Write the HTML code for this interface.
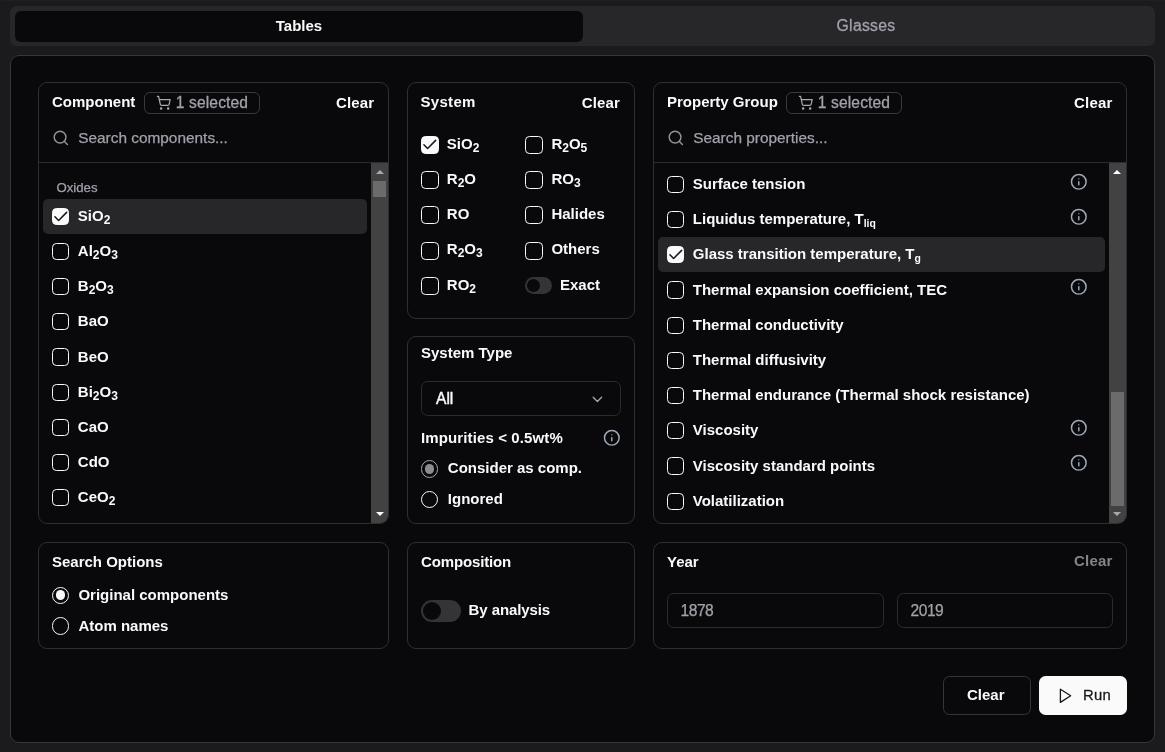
<!DOCTYPE html>
<html lang="en">
<head>
<meta charset="utf-8">
<title>Search</title>
<style>
*{box-sizing:border-box;margin:0;padding:0}
html,body{width:1165px;height:752px;overflow:hidden;background:#1b1b1d;}
body::before{content:"";position:absolute;left:0;top:0;width:1165px;height:1px;background:#1f1f22}
body{font-family:"Liberation Sans",sans-serif;color:#fafafa;font-size:15px;line-height:20px;position:relative;-webkit-font-smoothing:antialiased}
.abs{position:absolute}
.tabs{will-change:transform;position:absolute;left:10px;top:6px;width:1145px;height:40px;background:#27272a;border-radius:7px}
.tab{position:absolute;top:5px;height:31px;padding-bottom:1.6px;border-radius:6px;display:flex;align-items:center;justify-content:center;font-size:15px}
.tab.on{left:5px;width:568px;background:#09090b;color:#fafafa;font-weight:bold}
.tab.off{-webkit-text-stroke:.3px #a1a1aa;left:573px;width:568px;color:#a1a1aa;font-size:15.8px;letter-spacing:.25px;padding-right:2px}
.main{will-change:transform;position:absolute;left:10px;top:55px;width:1145px;height:688px;background:#09090b;border:1px solid #36363b;border-radius:9px}
.card{position:absolute;background:#09090b;border:1px solid #2f2f33;border-radius:9px;overflow:hidden}
.title{position:absolute;font-weight:bold;font-size:15px;line-height:20px;white-space:nowrap;color:#fafafa}
.clear{position:absolute;font-weight:bold;font-size:15px;line-height:20px;color:#fafafa;letter-spacing:.15px;margin-left:-.5px}
.clear.dim{color:#858589}
.badge{position:absolute;height:22px;border:1px solid #38383e;border-radius:6px;color:#a1a1aa;font-size:15.6px;line-height:20px;display:flex;align-items:center;white-space:nowrap}
.badge svg{position:absolute;left:11px;top:1.8px}
.badge span{-webkit-text-stroke:.3px #a1a1aa;position:absolute;left:30.8px;top:0px;letter-spacing:.12px}
.search{position:absolute;left:0;right:0;top:36px;height:44px;border-bottom:1px solid #2c2c30}
.search svg{position:absolute;left:12.7px;top:11.2px}
.search span{-webkit-text-stroke:.25px #a1a1aa;position:absolute;left:39.2px;top:9.5px;color:#a1a1aa;font-size:15.4px;white-space:nowrap}
.row{position:absolute;height:35.2px;display:flex;align-items:center;font-weight:bold;font-size:15px;white-space:nowrap;border-radius:5px}
.row.sel{background:#27272a}
.cb{flex:none;display:inline-block;width:17.2px;height:17.2px;border:1.1px solid #fafafa;border-radius:4.4px;position:relative}
.cb.on{background:#fafafa}
.sys .cb{width:17.9px;height:17.9px}
.sys .cb svg{left:-.9px;top:-.9px}
.cb svg{position:absolute;left:-1.2px;top:-1.1px}
.row .lbl{position:absolute;top:7.2px;line-height:20px}
sub{font-size:12px;vertical-align:-2.7px;line-height:0}
sub.l{font-size:10.4px;vertical-align:-3.2px}
.grp{-webkit-text-stroke:.25px #a1a1aa;position:absolute;color:#a1a1aa;font-size:13.2px;line-height:18px}
.sbar{position:absolute;width:17px;background:#424242}
.sbar .thumb{position:absolute;left:2px;width:13px;background:#6b6b6b}
.tri{position:absolute;left:4.5px;width:0;height:0;border-left:4px solid transparent;border-right:4px solid transparent}
.tri.up{border-bottom:4.5px solid #fff}
.tri.dn{border-top:4.5px solid #fff}
.tri.dis{opacity:.55}
.info{position:absolute;width:17.6px;height:17.6px}
.radio{position:absolute;width:17.3px;height:17.3px;border:1.1px solid #fafafa;border-radius:50%}
.radio.on::after{content:"";position:absolute;left:2.6px;top:2.6px;width:9.9px;height:9.9px;border-radius:50%;background:#fafafa}
.radio.dis{border-color:#a9a9ab}
.radio.dis::after{background:#8d8d8f}
.txt{position:absolute;font-weight:bold;font-size:15px;line-height:20px;white-space:nowrap}
.switch{position:absolute;background:#333338;border-radius:99px}
.switch i{position:absolute;border-radius:50%;background:#09090b}
.input{-webkit-text-stroke:.25px #a1a1aa;letter-spacing:-.5px;position:absolute;height:35px;border:1px solid #2c2c30;border-radius:6.6px;color:#a1a1aa;font-size:15.6px;line-height:33px;padding-left:12.6px}
.btn{position:absolute;top:621px;height:39px;border-radius:6.6px;display:flex;align-items:center;justify-content:center;font-size:15px}
</style>
</head>
<body>
<div class="tabs">
  <div class="tab on">Tables</div>
  <div class="tab off">Glasses</div>
</div>
<div class="main">

<div class="card" style="left:27px;top:26px;width:351px;height:442px">
<div class="title" style="left:13px;top:8.799999999999997px">Component</div>
<div class="badge" style="left:105px;top:9px;width:116px"><svg class="cart" viewBox="0 0 24 24" width="15.4" height="15.4" fill="none" stroke="#a9a9b2" stroke-width="1.9" stroke-linecap="round" stroke-linejoin="round"><circle cx="8" cy="21" r="1"/><circle cx="19" cy="21" r="1"/><path d="M2.05 2.05h2l2.66 12.42a2 2 0 0 0 2 1.58h9.78a2 2 0 0 0 1.95-1.57l1.65-7.43H5.12"/></svg><span>1 selected</span></div>
<div class="clear" style="left:297.5px;top:9.599999999999994px">Clear</div>
<div class="search" style="top:35px;height:45px"><svg viewBox="0 0 24 24" width="17.6" height="17.6" fill="none" stroke="#929296" stroke-width="2" stroke-linecap="round" stroke-linejoin="round"><circle cx="11" cy="11" r="8"/><path d="m21 21-4.3-4.3"/></svg><span>Search components...</span></div>
<div class="grp" style="left:17.5px;top:95.5px">Oxides</div>
<div class="row sel" style="left:4px;top:115.80px;width:324px;padding-left:9px"><span class="cb on"><svg viewBox="0 0 24 24" width="17.6" height="17.6" fill="none" stroke="#18181b" stroke-width="2.1" stroke-linecap="round" stroke-linejoin="round"><path d="M20 6 9 17l-5-5"/></svg></span><span class="lbl" style="left:34.8px">SiO<sub>2</sub></span></div>
<div class="row" style="left:4px;top:150.95px;width:324px;padding-left:9px"><span class="cb"></span><span class="lbl" style="left:34.8px">Al<sub>2</sub>O<sub>3</sub></span></div>
<div class="row" style="left:4px;top:186.10px;width:324px;padding-left:9px"><span class="cb"></span><span class="lbl" style="left:34.8px">B<sub>2</sub>O<sub>3</sub></span></div>
<div class="row" style="left:4px;top:221.25px;width:324px;padding-left:9px"><span class="cb"></span><span class="lbl" style="left:34.8px">BaO</span></div>
<div class="row" style="left:4px;top:256.40px;width:324px;padding-left:9px"><span class="cb"></span><span class="lbl" style="left:34.8px">BeO</span></div>
<div class="row" style="left:4px;top:291.55px;width:324px;padding-left:9px"><span class="cb"></span><span class="lbl" style="left:34.8px">Bi<sub>2</sub>O<sub>3</sub></span></div>
<div class="row" style="left:4px;top:326.70px;width:324px;padding-left:9px"><span class="cb"></span><span class="lbl" style="left:34.8px">CaO</span></div>
<div class="row" style="left:4px;top:361.85px;width:324px;padding-left:9px"><span class="cb"></span><span class="lbl" style="left:34.8px">CdO</span></div>
<div class="row" style="left:4px;top:397.00px;width:324px;padding-left:9px"><span class="cb"></span><span class="lbl" style="left:34.8px">CeO<sub>2</sub></span></div>
<div class="sbar" style="left:332px;top:80px;height:360px"><div class="tri up dis" style="top:7px"></div><div class="thumb" style="top:17.5px;height:16.5px"></div><div class="tri dn" style="bottom:7.2px"></div></div>
</div>
<div class="card" style="left:396px;top:26px;width:228px;height:237px">
<div class="title" style="left:12.5px;top:8.799999999999997px;letter-spacing:.3px">System</div>
<div class="clear" style="left:174.29999999999995px;top:9.599999999999994px">Clear</div>
<div class="row sys" style="left:13px;top:44.30px;width:100px"><span class="cb on"><svg viewBox="0 0 24 24" width="17.6" height="17.6" fill="none" stroke="#18181b" stroke-width="2.1" stroke-linecap="round" stroke-linejoin="round"><path d="M20 6 9 17l-5-5"/></svg></span><span class="lbl" style="left:25.8px;top:6.4px">SiO<sub>2</sub></span></div>
<div class="row sys" style="left:13px;top:79.55px;width:100px"><span class="cb"></span><span class="lbl" style="left:25.8px;top:6.4px">R<sub>2</sub>O</span></div>
<div class="row sys" style="left:13px;top:114.80px;width:100px"><span class="cb"></span><span class="lbl" style="left:25.8px;top:6.4px">RO</span></div>
<div class="row sys" style="left:13px;top:150.05px;width:100px"><span class="cb"></span><span class="lbl" style="left:25.8px;top:6.4px">R<sub>2</sub>O<sub>3</sub></span></div>
<div class="row sys" style="left:13px;top:185.30px;width:100px"><span class="cb"></span><span class="lbl" style="left:25.8px;top:6.4px">RO<sub>2</sub></span></div>
<div class="row sys" style="left:117px;top:44.30px;width:100px"><span class="cb"></span><span class="lbl" style="left:26.4px;top:6.4px">R<sub>2</sub>O<sub>5</sub></span></div>
<div class="row sys" style="left:117px;top:79.55px;width:100px"><span class="cb"></span><span class="lbl" style="left:26.4px;top:6.4px">RO<sub>3</sub></span></div>
<div class="row sys" style="left:117px;top:114.80px;width:100px"><span class="cb"></span><span class="lbl" style="left:26.4px;top:6.4px">Halides</span></div>
<div class="row sys" style="left:117px;top:150.05px;width:100px"><span class="cb"></span><span class="lbl" style="left:26.4px;top:6.4px">Others</span></div>
<div class="switch" style="left:117px;top:194.10000000000002px;width:27px;height:16.9px"><i style="left:1.9px;top:1.8px;width:13.3px;height:13.3px"></i></div>
<div class="txt" style="left:152px;top:191.5px">Exact</div>
</div>
<div class="card" style="left:396px;top:280px;width:228px;height:188px">
<div class="title" style="left:13px;top:5.699999999999989px">System Type</div>
<div class="input" style="left:13px;top:44px;width:200px;height:35px;color:#fafafa;-webkit-text-stroke:.4px #fafafa;letter-spacing:0;font-size:15.6px;padding-left:14px">All<svg style="position:absolute;right:13.8px;top:8.8px" viewBox="0 0 24 24" width="16.8" height="16.8" fill="none" stroke="#a1a1aa" stroke-width="2" stroke-linecap="round" stroke-linejoin="round"><path d="m6 9 6 6 6-6"/></svg></div>
<div class="txt" style="left:13px;top:90.60000000000002px;letter-spacing:.12px">Impurities &lt; 0.5wt%</div>
<div class="info" style="left:195.20000000000005px;top:91.80000000000001px"><svg viewBox="0 0 24 24" width="17.6" height="17.6" fill="none" stroke="#a0a8b8" stroke-width="2" stroke-linecap="round" stroke-linejoin="round"><circle cx="12" cy="12" r="10"/><path d="M12 16v-4"/><path d="M12 8h.01"/></svg></div>
<div class="radio on dis" style="left:13px;top:123.30000000000001px"></div>
<div class="txt" style="left:39.80000000000001px;top:120.80000000000001px">Consider as comp.</div>
<div class="radio" style="left:13px;top:154px"></div>
<div class="txt" style="left:39.80000000000001px;top:152px">Ignored</div>
</div>
<div class="card" style="left:642px;top:26px;width:474.4000000000001px;height:442px">
<div class="title" style="left:13px;top:8.799999999999997px">Property Group</div>
<div class="badge" style="left:132px;top:9px;width:116px"><svg class="cart" viewBox="0 0 24 24" width="15.4" height="15.4" fill="none" stroke="#a9a9b2" stroke-width="1.9" stroke-linecap="round" stroke-linejoin="round"><circle cx="8" cy="21" r="1"/><circle cx="19" cy="21" r="1"/><path d="M2.05 2.05h2l2.66 12.42a2 2 0 0 0 2 1.58h9.78a2 2 0 0 0 1.95-1.57l1.65-7.43H5.12"/></svg><span>1 selected</span></div>
<div class="clear" style="left:420.5999999999999px;top:9.599999999999994px">Clear</div>
<div class="search" style="top:35px;height:45px"><svg viewBox="0 0 24 24" width="17.6" height="17.6" fill="none" stroke="#929296" stroke-width="2" stroke-linecap="round" stroke-linejoin="round"><circle cx="11" cy="11" r="8"/><path d="m21 21-4.3-4.3"/></svg><span>Search properties...</span></div>
<div class="row" style="left:4px;top:83.80px;width:447px;padding-left:9px"><span class="cb"></span><span class="lbl" style="left:34.8px">Surface tension</span></div>
<div class="info" style="left:416px;top:89.60px"><svg viewBox="0 0 24 24" width="17.6" height="17.6" fill="none" stroke="#a0a8b8" stroke-width="2" stroke-linecap="round" stroke-linejoin="round"><circle cx="12" cy="12" r="10"/><path d="M12 16v-4"/><path d="M12 8h.01"/></svg></div>
<div class="row" style="left:4px;top:119.00px;width:447px;padding-left:9px"><span class="cb"></span><span class="lbl" style="left:34.8px">Liquidus temperature, T<sub class="l">liq</sub></span></div>
<div class="info" style="left:416px;top:124.80px"><svg viewBox="0 0 24 24" width="17.6" height="17.6" fill="none" stroke="#a0a8b8" stroke-width="2" stroke-linecap="round" stroke-linejoin="round"><circle cx="12" cy="12" r="10"/><path d="M12 16v-4"/><path d="M12 8h.01"/></svg></div>
<div class="row sel" style="left:4px;top:154.20px;width:447px;padding-left:9px"><span class="cb on"><svg viewBox="0 0 24 24" width="17.6" height="17.6" fill="none" stroke="#18181b" stroke-width="2.1" stroke-linecap="round" stroke-linejoin="round"><path d="M20 6 9 17l-5-5"/></svg></span><span class="lbl" style="left:34.8px">Glass transition temperature, T<sub class="l">g</sub></span></div>
<div class="row" style="left:4px;top:189.40px;width:447px;padding-left:9px"><span class="cb"></span><span class="lbl" style="left:34.8px">Thermal expansion coefficient, TEC</span></div>
<div class="info" style="left:416px;top:195.20px"><svg viewBox="0 0 24 24" width="17.6" height="17.6" fill="none" stroke="#a0a8b8" stroke-width="2" stroke-linecap="round" stroke-linejoin="round"><circle cx="12" cy="12" r="10"/><path d="M12 16v-4"/><path d="M12 8h.01"/></svg></div>
<div class="row" style="left:4px;top:224.60px;width:447px;padding-left:9px"><span class="cb"></span><span class="lbl" style="left:34.8px">Thermal conductivity</span></div>
<div class="row" style="left:4px;top:259.80px;width:447px;padding-left:9px"><span class="cb"></span><span class="lbl" style="left:34.8px">Thermal diffusivity</span></div>
<div class="row" style="left:4px;top:295.00px;width:447px;padding-left:9px"><span class="cb"></span><span class="lbl" style="left:34.8px">Thermal endurance (Thermal shock resistance)</span></div>
<div class="row" style="left:4px;top:330.20px;width:447px;padding-left:9px"><span class="cb"></span><span class="lbl" style="left:34.8px">Viscosity</span></div>
<div class="info" style="left:416px;top:336.00px"><svg viewBox="0 0 24 24" width="17.6" height="17.6" fill="none" stroke="#a0a8b8" stroke-width="2" stroke-linecap="round" stroke-linejoin="round"><circle cx="12" cy="12" r="10"/><path d="M12 16v-4"/><path d="M12 8h.01"/></svg></div>
<div class="row" style="left:4px;top:365.40px;width:447px;padding-left:9px"><span class="cb"></span><span class="lbl" style="left:34.8px">Viscosity standard points</span></div>
<div class="info" style="left:416px;top:371.20px"><svg viewBox="0 0 24 24" width="17.6" height="17.6" fill="none" stroke="#a0a8b8" stroke-width="2" stroke-linecap="round" stroke-linejoin="round"><circle cx="12" cy="12" r="10"/><path d="M12 16v-4"/><path d="M12 8h.01"/></svg></div>
<div class="row" style="left:4px;top:400.60px;width:447px;padding-left:9px"><span class="cb"></span><span class="lbl" style="left:34.8px">Volatilization</span></div>
<div class="sbar" style="left:454.70000000000005px;top:80px;height:360px"><div class="tri up" style="top:7px"></div><div class="thumb" style="top:229px;height:114px"></div><div class="tri dn dis" style="bottom:7.2px"></div></div>
</div>
<div class="card" style="left:27px;top:486px;width:351px;height:107px">
<div class="title" style="left:13px;top:8.799999999999955px">Search Options</div>
<div class="radio on" style="left:13px;top:43.700000000000045px"></div>
<div class="txt" style="left:39.400000000000006px;top:41.700000000000045px">Original components</div>
<div class="radio" style="left:13px;top:74.29999999999995px"></div>
<div class="txt" style="left:39.400000000000006px;top:72.60000000000002px">Atom names</div>
</div>
<div class="card" style="left:396px;top:486px;width:228px;height:107px">
<div class="title" style="left:13px;top:8.799999999999955px;letter-spacing:-.14px">Composition</div>
<div class="switch" style="left:12.800000000000011px;top:56.799999999999955px;width:40.4px;height:21.8px"><i style="left:1.9px;top:1.8px;width:18.2px;height:18.2px"></i></div>
<div class="txt" style="left:60.60000000000002px;top:56.700000000000045px;letter-spacing:-.1px">By analysis</div>
</div>
<div class="card" style="left:642px;top:486px;width:474.4000000000001px;height:107px">
<div class="title" style="left:13px;top:8.799999999999955px">Year</div>
<div class="clear dim" style="left:420.5999999999999px;top:8.299999999999955px">Clear</div>
<div class="input" style="left:13px;top:50px;width:217px">1878</div>
<div class="input" style="left:243px;top:50px;width:215.8px">2019</div>
</div>
<div class="btn" style="left:932px;top:620.3px;width:88px;border:1px solid #36363a;color:#fafafa;font-weight:bold;padding:0 2.4px 2px 0">Clear</div>
<div class="btn" style="left:1028px;top:620.3px;width:88px;background:#fafafa;color:#18181b;font-size:14.8px;letter-spacing:.35px;-webkit-text-stroke:.3px #18181b"><svg style="margin:0 9.2px 0 1.2px;position:relative;top:.2px" viewBox="0 0 24 24" width="17.6" height="17.6" fill="none" stroke="#18181b" stroke-width="1.8" stroke-linecap="round" stroke-linejoin="round"><polygon points="6 3 20 12 6 21 6 3"/></svg><span style="position:relative;top:-.6px">Run</span></div>
</div>
</body>
</html>
